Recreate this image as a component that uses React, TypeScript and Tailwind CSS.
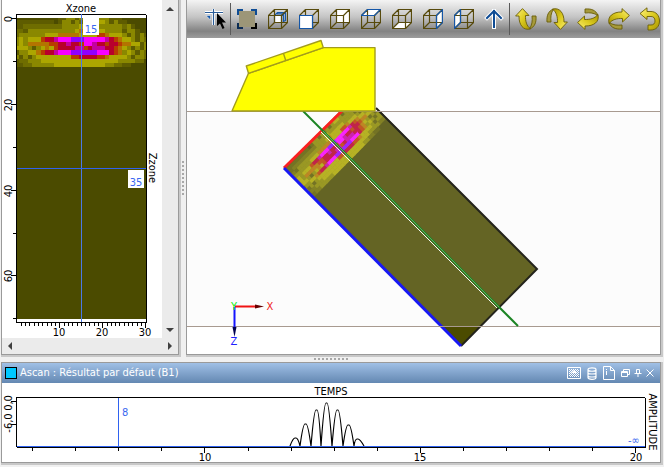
import type { ReactNode } from 'react';

// Echo amplitudes, one character per sample (31 columns x 12 rows)
const heatRows = [
    '..........aaccacbcacccaaa......',
    'aaaaaaaaa.accacbcacddcacaa.....',
    'aabbbbbbbbbccccdcccccccccbca...',
    'bbacccccccccccdodddddccccacca..',
    'bccccccdddooooodddd' + 'rrodddcacaca',
    'cdcdddrRRpmmmvvvmmmmmpRroddcacb',
    'cdcooooorrRRpRRrmmpRRrRRrooddac',
    'dddcacdodrRRRRpprRpppRRrodcacac',
    'accddorRRpmmmvvvvvvmmmRrocdcacb',
    'cacacddddddddrrRRRRrroddddcaccb',
    'abbcccddddddddddddddddddccccbb.',
    'aabbcccccddddddddddddccbbaa....',
];

const heatColors: Record<string, string> = {
    a: '#5e5c00',
    b: '#6f6d00',
    c: '#8a8800',
    d: '#aca600',
    o: '#b37400',
    r: '#b83c00',
    R: '#b8002c',
    p: '#c400a0',
    m: '#f800ff',
    v: '#9000ff',
};

// Drawn in zone units (x 0..30, z 0..70), samples centred on whole units
function HeatCells({ overlap = 0 }: { overlap?: number }) {
    return (
        <>
            {heatRows.map((row, r) =>
                row.split('').map((cell, c) => {
                    if (cell === '.') return null;
                    const top = Math.max(0, r - 0.5);
                    const left = Math.max(0, c - 0.5);
                    return (
                        <rect
                            key={`${r}-${c}`}
                            x={left}
                            y={top}
                            width={Math.min(c + 0.5 + overlap, 30) - left}
                            height={r + 0.5 - top + overlap}
                            fill={heatColors[cell]}
                        />
                    );
                })
            )}
        </>
    );
}

const chartText = "overflow-visible font-['DejaVu_Sans_Condensed','DejaVu_Sans',sans-serif] text-[11px]";

function ZoneChart() {
    const minor = Array.from({ length: 30 }, (_, i) => i + 1);
    return (
        <svg viewBox="2 0 160 338" className={`w-[160px] shrink-0 bg-white ${chartText}`} role="img" aria-label="Xzone / Zzone">
            <rect x="17" y="18" width="129" height="301" fill="#4b4b00" />
            <g transform="translate(17 18) scale(4.3)" shapeRendering="crispEdges">
                <HeatCells />
            </g>
            <g stroke="#000" shapeRendering="crispEdges">
                <path d="M16.5 14V322M146.5 15V322M16 14.5H146M16 322.5H147" fill="none" />
                {[0, 10, 20, 30, 40, 50, 60, 70].map((z) => (
                    <line key={z} x1={z % 20 ? 13 : 11} x2="16" y1={Math.round(18 + z * 4.29) + 0.5} y2={Math.round(18 + z * 4.29) + 0.5} />
                ))}
                {minor.map((x) => (
                    <line key={x} y1="322" y2={x % 10 ? 326 : 328} x1={Math.floor(17 + x * 4.29) + 0.5} x2={Math.floor(17 + x * 4.29) + 0.5} />
                ))}
            </g>
            <path d="M81.5 14V322" stroke="#4a78e8" shapeRendering="crispEdges" />
            <path d="M17 168.5H146" stroke="#2f62f0" shapeRendering="crispEdges" />
            <rect x="83" y="18" width="16" height="17" fill="#fff" />
            <rect x="128" y="170" width="16" height="18" fill="#fff" />
            <g fill="#3a68f0" textAnchor="middle">
                <text x="91" y="33">15</text>
                <text x="136" y="186">35</text>
            </g>
            <g textAnchor="middle">
                <text x="81" y="12">Xzone</text>
                <text x="59" y="336">10</text>
                <text x="102" y="336">20</text>
                <text x="145" y="336">30</text>
                <text transform="translate(149 168) rotate(90)">Zzone</text>
                <text transform="translate(12 19) rotate(-90)">0</text>
                <text transform="translate(12 105) rotate(-90)">20</text>
                <text transform="translate(12 191) rotate(-90)">40</text>
                <text transform="translate(12 276) rotate(-90)">60</text>
            </g>
        </svg>
    );
}

function Scene() {
    return (
        <svg viewBox="187 38 473 316" className={`block h-auto w-full bg-white ${chartText}`} role="img" aria-label="Vue 3D">
            <defs>
                <clipPath id="block-below">
                    <rect x="187" y="111" width="473" height="243" />
                </clipPath>
                <clipPath id="block-slab">
                    <rect x="187" y="111" width="473" height="215" />
                </clipPath>
            </defs>
            <rect x="187" y="111" width="473" height="215" fill="#fcfcfc" />
            <g clipPath="url(#block-below)">
                <path d="M284 168L461 346L537 269L360 91Z" fill="#4b4b00" />
                <g transform="matrix(2.5333 -2.5667 2.5286 2.5429 284 168)">
                    <HeatCells overlap={0.12} />
                </g>
            </g>
            <path d="M284 168L461 346L537 269L360 91Z" fill="#fff" opacity="0.14" clipPath="url(#block-slab)" />
            <path d="M376 108L537 269L461 346" fill="none" stroke="#24241c" strokeWidth="2" />
            <path d="M342 111L284 168" stroke="#fa2020" strokeWidth="3" />
            <path d="M284 168L461 346" stroke="#1818f4" strokeWidth="3" />
            <path d="M187 111.5H660M187 326.5H660" stroke="#a89a90" shapeRendering="crispEdges" />
            <path d="M303 111L518 326" stroke="#1c8424" strokeWidth="2" />
            <path d="M323 131L499 307" stroke="#8cc88c" strokeWidth="0.6" />
            <path d="M321 132L497 308" stroke="#f4fff4" strokeWidth="1" />

            {/* Probe and wedge */}
            <g fill="#ff0" stroke="#a39d1c" strokeWidth="1.4" strokeLinejoin="round">
                <path d="M232 111L248.500 73.300L323.300 47.600H375V111Z" />
                <path d="M246.300 66L321 40.500L323.300 47.600L248.500 73.300Z" />
                <path d="M283.500 53.500L285.700 60.500" />
            </g>

            {/* Axis triad */}
            <path d="M235 306.500H256" stroke="#f01414" strokeWidth="2" />
            <path d="M255 304.500L264 306.500L255 308.500Z" fill="#600" />
            <path d="M234.500 307V328" stroke="#1414ff" strokeWidth="2" />
            <path d="M232.500 327L234.500 337L236.500 327Z" fill="#000050" />
            <g textAnchor="middle">
                <text x="270" y="310" fill="#f02020">X</text>
                <text x="234" y="345" fill="#2020ff">Z</text>
                <text x="234" y="310" fill="#10f010">Y</text>
            </g>
        </svg>
    );
}

const cubeFaces: Record<string, string> = {
    front: 'M.5 6.500H13.500V19.500H.5Z',
    back: 'M6.500 .5H19.500V13.500H6.500Z',
    top: 'M.5 6.500L6.500 .5H19.500L13.500 6.500Z',
    bottom: 'M.5 19.500L6.500 13.500H19.500L13.500 19.500Z',
    right: 'M13.500 6.500L19.500 .5V13.500L13.500 19.500Z',
    left: 'M.5 6.500L6.500 .5V13.500L.5 19.500Z',
};

function CubeIcon({ face }: { face: string }) {
    const blue = face !== 'back' && face !== 'bottom';
    return (
        <svg viewBox="0 0 20 20" className="size-5" fill="none" stroke="#574a0c" strokeWidth="1.2">
            {cubeFaces[face] && <path d={cubeFaces[face]} fill="#fff" stroke="none" />}
            {face === 'all' && (
                <g stroke="#1456a8">
                    <path d="M6.500 6.500H13.500V13.500H6.500Z" fill="#fff" />
                    <path d="M6.500 6.500L9.500 3.500H17.500V11.500L13.500 13.500M13.500 6.500L17.500 3.500M15.500 5V13M9 4.800H16" />
                </g>
            )}
            <path d="M.5 6.500H13.500V19.500H.5ZM6.500 .5H19.500V13.500H6.500ZM.5 6.500L6.500 .5M13.500 6.500L19.500 .5M13.500 19.500L19.500 13.500M.5 19.500L6.500 13.500" />
            {cubeFaces[face] && blue && <path d={cubeFaces[face]} fill={face === 'front' ? '#fff' : 'none'} stroke="#1456a8" />}
        </svg>
    );
}

function TurnIcon({ className }: { className: string }) {
    return (
        <svg viewBox="0 0 22 22" className={`size-[22px] ${className}`} stroke="#6a5e08" strokeWidth="0.9" strokeLinejoin="round">
            <defs>
                <linearGradient id="gold" x1="0" y1="0" x2="1" y2="1">
                    <stop offset="0" stopColor="#fff27a" />
                    <stop offset="0.5" stopColor="#dccb20" />
                    <stop offset="1" stopColor="#a89400" />
                </linearGradient>
            </defs>
            <path d="M17 8H21C21.500 14 20 19 14.500 21C17 17 17.600 13 17 8Z" fill="#a69a3a" />
            <path d="M7.500 .6L14 7.500H10.500C10.300 13 11.500 18 15.500 20.800C8.500 23 3.800 17 4 8L.6 8Z" fill="url(#gold)" />
        </svg>
    );
}

function ToolButton({ label, className = '', children }: { label: string; className?: string; children: ReactNode }) {
    return (
        <button aria-label={label} className={`flex h-8 w-[31px] shrink-0 items-center justify-center ${className}`}>
            {children}
        </button>
    );
}

function Toolbar() {
    return (
        <div className="flex h-[38px] items-center overflow-hidden bg-[linear-gradient(#f4f4f4,#c4c4c4_45%,#828282_82%,#9c9c9c)] pl-[13px]">
            <ToolButton label="Sélection" className="border-r border-[#5a5a5a]">
                <svg viewBox="0 0 22 22" className="size-[22px]">
                    <path d="M1 4.500H19M9.500 1V17" stroke="#fff" strokeWidth="3" fill="none" />
                    <path d="M1 4.500H19M9.500 1V17" stroke="#2a5c98" strokeWidth="1.2" fill="none" />
                    <path d="M2 7.500H6.500V12Z" fill="#1456a8" stroke="#fff" strokeWidth="0.5" />
                    <path d="M13 5V18L16 15.500L18.500 21L20.500 20L18 14.500H22Z" fill="#000" />
                </svg>
            </ToolButton>
            <ToolButton label="Ajuster">
                <svg viewBox="0 0 20 20" className="size-5">
                    <rect x="2" y="2" width="16" height="16" fill="#9c9678" />
                    <path d="M1 6V1H6M14 1H19V6" stroke="#0f4c94" strokeWidth="2" fill="none" />
                    <path d="M1 14V19H6" stroke="#0c2c54" strokeWidth="2" fill="none" />
                    <path d="M14 19H19V14" stroke="#000" strokeWidth="2" fill="none" />
                </svg>
            </ToolButton>
            {['all', 'front', 'back', 'top', 'bottom', 'right', 'left'].map((face) => (
                <ToolButton key={face} label={`Vue ${face}`}>
                    <CubeIcon face={face} />
                </ToolButton>
            ))}
            <ToolButton label="Vers le haut" className="border-r border-[#5a5a5a]">
                <svg viewBox="0 0 20 20" className="size-5" fill="none" strokeLinecap="square">
                    <path d="M10 18V2M3 9L10 2L17 9" stroke="#fff" strokeWidth="4" />
                    <path d="M10 18V2M3 9L10 2L17 9" stroke="#0f4c94" strokeWidth="2" />
                </svg>
            </ToolButton>
            <ToolButton label="Pivoter vers le haut"><TurnIcon className="" /></ToolButton>
            <ToolButton label="Pivoter vers le bas"><TurnIcon className="rotate-180" /></ToolButton>
            <ToolButton label="Pivoter à gauche"><TurnIcon className="-rotate-90" /></ToolButton>
            <ToolButton label="Pivoter à droite"><TurnIcon className="rotate-90" /></ToolButton>
            <ToolButton label="Tourner">
                <svg viewBox="0 0 22 24" className="h-6 w-[22px]" stroke="#6a5e08" strokeWidth="0.9" strokeLinejoin="round">
                    <path d="M1 6.500L8 .8V4.500H12C17 4.500 20.500 8.500 20.500 14C20.500 19.500 17 23 12 23H9V18H12C14.500 18 16 16.500 16 14C16 11 14.500 9.500 12 9.500H8V12.500Z" fill="url(#gold)" />
                </svg>
            </ToolButton>
        </div>
    );
}

// Peak position and height of each lobe of the A-scan signal
const lobes = [
    { from: 290, peak: 295, to: 300, top: 438 },
    { from: 300, peak: 305, to: 311, top: 424 },
    { from: 311, peak: 316, to: 321, top: 410 },
    { from: 321, peak: 326, to: 332, top: 403 },
    { from: 332, peak: 337, to: 343, top: 410 },
    { from: 343, peak: 348, to: 354, top: 425 },
    { from: 354, peak: 357, to: 364, top: 439 },
];

function AscanChart() {
    const signal = lobes
        .map((l) => `M${l.from} 446Q${l.peak - 2} ${l.top} ${l.peak} ${l.top}H${l.peak + 1}Q${l.peak + 3} ${l.top} ${l.to} 446`)
        .join('');
    return (
        <svg viewBox="2 383 658 79" className={`block h-auto w-full bg-white ${chartText}`} role="img" aria-label="Ascan">
            <g stroke="#000" fill="none" shapeRendering="crispEdges">
                <path d="M16.500 397V447M645.500 398V447M17 397.500H645M17 447.500H646M11 401.500H16M11 424.500H16" />
                {Array.from({ length: 15 }, (_, i) => (
                    <line key={i} x1={Math.round(32 + i * 43.1) + 0.5} x2={Math.round(32 + i * 43.1) + 0.5} y1="448" y2={i % 5 === 4 ? 453 : 451} />
                ))}
            </g>
            <path d={signal} fill="none" stroke="#000" strokeWidth="1.2" />
            <path d="M17 446.500H645M118.500 398V446" stroke="#2f62f0" shapeRendering="crispEdges" />
            <g fill="#3a68f0">
                <text x="122" y="416">8</text>
                <text x="628" y="444">-∞</text>
            </g>
            <g textAnchor="middle">
                <text x="331" y="395">TEMPS</text>
                <text x="205" y="461">10</text>
                <text x="420" y="461">15</text>
                <text x="636" y="461">20</text>
                <text transform="translate(12 403) rotate(-90)">0,0</text>
                <text transform="translate(12 423) rotate(-90)">-6,0</text>
                <text transform="translate(649 422) rotate(90)">AMPLITUDE</text>
            </g>
        </svg>
    );
}

function ScrollButton({ label, path, className }: { label: string; path: string; className: string }) {
    return (
        <button aria-label={label} className={`flex items-center justify-center ${className}`}>
            <svg viewBox="0 0 8 8" className="size-2" fill="#404040"><path d={path} /></svg>
        </button>
    );
}

function Grip({ className }: { className: string }) {
    return (
        <div className={`flex items-center justify-center gap-0.5 ${className}`}>
            {Array.from({ length: 9 }, (_, i) => <span key={i} className="size-0.5 bg-[#a8a8a8]" />)}
        </div>
    );
}

const panel = 'border border-[#9a9a9a] bg-white shadow-[1px_1px_0_1px_#c8c8c8]';

export default function App() {
    return (
        <div className="flex min-h-screen flex-col bg-[#f0f0f0] pr-[3px] pb-1 pl-px font-['DejaVu_Sans_Condensed','DejaVu_Sans',sans-serif] text-black">
            <div className="flex">
                <section className={`flex w-[178px] shrink-0 flex-col ${panel} border-t-0`}>
                    <div className="flex">
                        <ZoneChart />
                        <div className="flex flex-1 flex-col justify-between bg-[#ebebeb]">
                            <ScrollButton label="Monter" path="M0 6L4 2L8 6Z" className="h-[17px] w-4" />
                            <ScrollButton label="Descendre" path="M0 2H8L4 6Z" className="h-[17px] w-4" />
                        </div>
                    </div>
                    <div className="flex h-4 flex-auto items-center justify-between bg-[#ebebeb]">
                        <ScrollButton label="Gauche" path="M6 0V8L2 4Z" className="h-4 w-4" />
                        <ScrollButton label="Droite" path="M2 0V8L6 4Z" className="h-4 w-4" />
                    </div>
                </section>
                <Grip className="w-[7px] shrink-0 flex-col" />
                <section className={`min-w-0 flex-1 ${panel} border-t-0`}>
                    <Toolbar />
                    <Scene />
                </section>
            </div>
            <Grip className="h-[7px]" />
            <section className={panel}>
                <header className="flex h-5 items-center bg-linear-to-b from-[#a0c0e6] to-[#6488b2] pr-1.5 pl-[3px]">
                    <span className="size-3 border border-black bg-[#00c8ff]" />
                    <h2 className="ml-[3px] flex-1 text-[11px] leading-5 text-white">Ascan : Résultat par défaut (B1)</h2>
                    <div className="flex items-center gap-1.5">
                        <button aria-label="Image">
                            <svg viewBox="0 0 14 12" className="block h-3 w-3.5" fill="none" stroke="#fff">
                                <path d="M.5 .5H13.500V11.500H.5Z" />
                                <path d="M2 2.500H12M2 4.500H12M2 6.500H12M2 8.500H12" strokeDasharray="1 1" />
                                <path d="M3 3.500H12M3 5.500H12M3 7.500H12M3 9.500H12" strokeDasharray="1 1" />
                                <path d="M4 6L7 3L10 6Z" fill="#fff" stroke="none" />
                            </svg>
                        </button>
                        <button aria-label="Données">
                            <svg viewBox="0 0 10 13" className="block h-[13px] w-2.5" fill="none" stroke="#fff" strokeWidth="1.2">
                                <path d="M1 2.500C1 .2 9 .2 9 2.500V10.500C9 12.900 1 12.900 1 10.500ZM1 2.500C1 4.800 9 4.800 9 2.500M1 5.500C1 7.500 9 7.500 9 5.500M1 8.500C1 10.500 9 10.500 9 8.500" />
                            </svg>
                        </button>
                        <button aria-label="Informations">
                            <svg viewBox="0 0 12 14" className="block h-3.5 w-3" fill="none" stroke="#fff">
                                <path d="M.5 .5H7.500L11.500 4.500V13.500H.5ZM7.500 .5V4.500H11.500M3.500 5V9M3.500 3V4" />
                            </svg>
                        </button>
                    </div>
                    <div className="ml-1.5 flex items-center gap-1">
                        <button aria-label="Détacher">
                            <svg viewBox="0 0 9 8" className="block h-2 w-[9px]" fill="none" stroke="#fff">
                                <path d="M2.500 2.500V.5H8.500V5.500H6.500M.5 2.500H6.500V7.500H.5ZM.5 3.500H6.500" />
                            </svg>
                        </button>
                        <button aria-label="Épingler">
                            <svg viewBox="0 0 8 8" className="block size-2" fill="none" stroke="#fff">
                                <path d="M2.500 4V.5H5.500V4M.5 4.500H7.500M4 5V8" />
                            </svg>
                        </button>
                        <button aria-label="Fermer">
                            <svg viewBox="0 0 8 8" className="block size-2" fill="none" stroke="#fff">
                                <path d="M.5 .5L7.500 7.500M7.500 .5L.5 7.500" />
                            </svg>
                        </button>
                    </div>
                </header>
                <AscanChart />
            </section>
        </div>
    );
}
